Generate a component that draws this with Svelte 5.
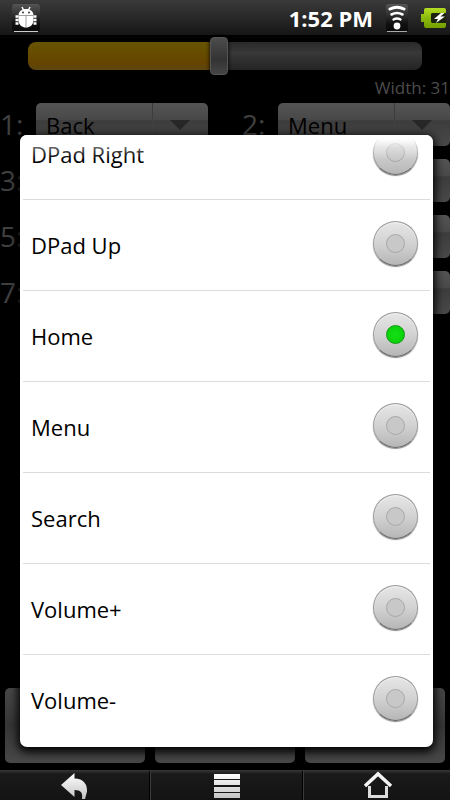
<script>
  let width = $state(31);
  let selected = $state('Home');
  const maxWidth = 64;
  const keys = ['DPad Right', 'DPad Up', 'Home', 'Menu', 'Search', 'Volume+', 'Volume-'];
  const choices = ['Back', 'Home', 'Menu', 'Search'];
  let slots = $state(['Back', 'Menu', 'Home', 'Search', 'Back', 'Menu', 'Home', 'Search']);
  const fill = $derived((width / maxWidth) * 100);
</script>

<div class="screen">
  <header class="status">
    <svg class="bug" width="28" height="28" viewBox="0 0 28 28" aria-hidden="true">
      <defs>
        <linearGradient id="tile" x1="0" y1="0" x2="0" y2="1">
          <stop offset="0" stop-color="#555" /><stop offset="0.7" stop-color="#111" /><stop offset="1" stop-color="#080808" />
        </linearGradient>
      </defs>
      <rect width="28" height="28" rx="3" fill="url(#tile)" />
      <path d="M2 27.500h24" stroke="#ccc" />
      <path d="M10 3l1.500 3M18 3l-1.500 3" stroke="#fff" stroke-width="1.500" />
      <path d="M6.500 11C7 3 21 3 21.500 11v5c0 10-15 10-15 0z" fill="#fff" />
      <path d="M3.500 12.500h3M3.500 16h3M3.500 19.500h3M21.500 12.500h3M21.500 16h3M21.500 19.500h3" stroke="#fff" stroke-width="2.400" />
      <path d="M6.500 11.500h15M14 11.500v11.500" stroke="#888" stroke-width="0.800" />
      <circle cx="11" cy="8.500" r="0.900" fill="#222" /><circle cx="17" cy="8.500" r="0.900" fill="#222" />
    </svg>
    <time>1:52 PM</time>
    <svg class="wifi" width="22" height="28" viewBox="0 0 22 28" aria-hidden="true">
      <rect width="22" height="28" rx="3" fill="url(#tile)" />
      <path d="M1 27.500h20" stroke="#aaa" />
      <circle cx="11" cy="22" r="3.400" fill="#fff" />
      <g fill="none" stroke="#fff" stroke-linecap="round">
        <path d="M4 5Q11 1.500 18 5" stroke-width="3" />
        <path d="M5.500 10.500Q11 7.500 16.500 10.500" stroke-width="2.600" />
        <path d="M7.500 15.500Q11 13.500 14.500 15.500" stroke-width="2.400" />
      </g>
    </svg>
    <svg width="27" height="22" viewBox="0 0 27 22" aria-hidden="true">
      <defs>
        <linearGradient id="cell" x1="0" y1="0" x2="0" y2="1">
          <stop offset="0" stop-color="#b4dc22" /><stop offset="0.5" stop-color="#8ab80c" /><stop offset="1" stop-color="#75a000" />
        </linearGradient>
      </defs>
      <path d="M6 1h18q2 0 2 2v3H13q-2 0-2 2v6q0 2 2 2h13v2q0 3-2 3H6q-2 0-2-3v-3H1V7h3V3q0-2 2-2z" fill="url(#cell)" />
      <path d="M13 6h13v10H13q-2 0-2-2V8q0-2 2-2z" fill="#1c2410" />
      <path d="M21 6l-7 6h4l-2 4 9-6.500h-4.500l4-3.500z" fill="#fff" />
    </svg>
  </header>

  <main>
    <input
      class="slider"
      type="range"
      min="0"
      max={maxWidth}
      bind:value={width}
      aria-label="Width"
      style="--fill: {fill}%"
    />
    <p class="readout">Width: {width}</p>

    <div class="slots">
      {#each slots as slot, i}
        <div class="slot">
          <label for="slot-{i}">{i + 1}:</label>
          <div class="spinner">
            <select id="slot-{i}" bind:value={slots[i]}>
              {#each choices as c}<option>{c}</option>{/each}
            </select>
            <svg width="20" height="10" viewBox="0 0 20 10" aria-hidden="true"><path d="M0 0h20L10 10z" fill="#272727" /></svg>
          </div>
        </div>
      {/each}
    </div>

    <div class="actions">
      <button type="button" aria-label="Save"></button>
      <button type="button" aria-label="Reset"></button>
      <button type="button" aria-label="Cancel"></button>
    </div>

    <div class="dialog" role="radiogroup" aria-label="Key">
      {#each keys as key}
        <label class="row">
          <span>{key}</span>
          <input type="radio" name="key" value={key} bind:group={selected} />
        </label>
      {/each}
    </div>
  </main>

  <nav>
    <button type="button" aria-label="Back">
      <svg width="28" height="28" viewBox="0 0 28 28">
        <defs>
          <linearGradient id="metal" x1="0" y1="0" x2="0" y2="1">
            <stop offset="0" stop-color="#fff" /><stop offset="1" stop-color="#c4c4c4" />
          </linearGradient>
        </defs>
        <path d="M0 13L13.500 1v5.500c9 0 13 6 12.500 13l-2 7.500h-3c1-6-1-9-7.500-9V25z" fill="url(#metal)" />
      </svg>
    </button>
    <button type="button" aria-label="Menu">
      <svg width="26" height="26" viewBox="0 0 26 26">
        <path d="M0 1h26v5H0zM0 7h26v5H0zM0 14h26v5H0zM0 20h26v5H0z" fill="url(#metal)" />
      </svg>
    </button>
    <button type="button" aria-label="Home">
      <svg width="28" height="28" viewBox="0 0 28 28">
        <path d="M2 14L15 2l13 12" fill="none" stroke="#f4f4f4" stroke-width="3.500" />
        <path d="M6.500 14v10.500h17V14" fill="none" stroke="#dcdcdc" stroke-width="3" />
      </svg>
    </button>
  </nav>
</div>

<style>
  :global(body) {
    margin: 0;
    background: #000;
  }
  .screen {
    display: flex;
    flex-direction: column;
    min-height: 100vh;
    overflow: hidden;
    background: #000;
    font-family: 'Open Sans', 'Noto Sans', sans-serif;
  }
  .status {
    display: flex;
    align-items: center;
    box-sizing: border-box;
    height: 35px;
    padding: 0 3px 0 12px;
    background: linear-gradient(#3a3a3a, #161616);
  }
  time {
    margin-left: auto;
    color: #fff;
    font: bold 22px/32px 'Open Sans', 'Noto Sans', sans-serif;
  }
  .wifi {
    margin: 0 12px 0 13px;
  }
  main {
    position: relative;
    display: flex;
    flex: 1;
    flex-direction: column;
  }
  .slider {
    appearance: none;
    height: 38px;
    margin: 2px 28px 0;
    background: none;
  }
  .slider::-webkit-slider-runnable-track {
    height: 28px;
    border-radius: 8px;
    background:
      linear-gradient(#665500, #664400 75%, #5c4610) 0 0 / var(--fill) 100% no-repeat,
      linear-gradient(#2a2a2a, #383838 40%, #242424);
  }
  .slider::-webkit-slider-thumb {
    appearance: none;
    width: 18px;
    height: 38px;
    margin-top: -5px;
    border: 1px solid #555;
    border-radius: 4px;
    background: linear-gradient(#4c4c4c, #333 60%, #454545);
    box-shadow: 0 0 4px #000;
  }
  .readout {
    margin: 0;
    color: #4c4c4c;
    font-size: 17px;
    line-height: 26px;
    text-align: right;
  }
  .slots {
    display: grid;
    grid-template-columns: 1fr 1fr;
    gap: 13px 34px;
    margin-top: 2px;
  }
  .slot {
    display: flex;
    align-items: center;
  }
  .slot label {
    width: 36px;
    color: #404040;
    font-size: 28px;
    line-height: 43px;
  }
  .spinner {
    position: relative;
    flex: 1;
    min-width: 0;
  }
  select {
    appearance: none;
    display: block;
    width: 100%;
    height: 43px;
    padding: 0 60px 0 10px;
    border: 0;
    border-radius: 5px;
    background:
      linear-gradient(#383838, #4a4a4a) calc(100% - 55px) 0 / 1px 100% no-repeat,
      linear-gradient(#545454, #484848 40%, #3c3c3c 41%, #494949);
    color: #000;
    font: 22px 'Open Sans', 'Noto Sans', sans-serif;
  }
  .spinner svg {
    position: absolute;
    top: 17px;
    right: 18px;
    pointer-events: none;
  }
  .actions {
    display: flex;
    gap: 10px;
    margin-top: auto;
    padding: 0 5px 7px;
  }
  .actions button {
    flex: 1;
    height: 75px;
    border: 0;
    border-radius: 5px;
    background: linear-gradient(#484848, #363636 50%, #484848);
  }
  .dialog {
    position: absolute;
    inset: 100px 17px 23px 20px;
    display: flex;
    flex-direction: column;
    justify-content: flex-end;
    box-sizing: border-box;
    overflow: hidden;
    padding: 0 3px 1px;
    border-radius: 7px;
    background: #fff;
    box-shadow: 0 3px 10px 2px #000;
  }
  .dialog::before {
    content: '';
    position: absolute;
    inset: 0 0 auto;
    height: 24px;
    background: linear-gradient(#fff 15%, #fff6 50%, #fff0);
  }
  .row {
    display: flex;
    flex: none;
    align-items: center;
    justify-content: space-between;
    box-sizing: border-box;
    height: 91px;
    padding: 0 12px 0 8px;
    border-bottom: 1px solid #dcdcdc;
    color: #000;
    font-size: 22px;
    line-height: 30px;
  }
  .row:last-child {
    border-color: transparent;
  }
  .row input {
    appearance: none;
    display: grid;
    place-items: center;
    box-sizing: border-box;
    width: 45px;
    height: 45px;
    margin: 0 0 4px;
    border: 1px solid #999;
    border-bottom-color: #666;
    border-radius: 50%;
    background: linear-gradient(#e6e6e6, #d2d2d2 50%, #b6b6b6);
    box-shadow: 0 1px 1px #888, inset 0 1px 1px #f4f4f4;
  }
  .row input::before {
    content: '';
    box-sizing: border-box;
    width: 19px;
    height: 19px;
    border: 1px solid #a8a8a8;
    border-radius: 50%;
    background: #c8c8c8;
  }
  .row input:checked::before {
    border-color: #0a9a0a;
    background: radial-gradient(#14e014, #0cd40c 60%, #0cb80c);
  }
  nav {
    display: grid;
    grid-template-columns: 150fr 153fr 147fr;
    height: 30px;
    background: linear-gradient(#303030, #1a1a1a 3px, #131313);
    border-top: 1px solid #333;
    box-sizing: border-box;
  }
  nav button {
    display: flex;
    align-items: center;
    justify-content: center;
    padding: 0;
    border: 0;
    background: none;
  }
  nav button svg {
    overflow: visible;
  }
  nav button + button {
    border-left: 1px solid #3c3c3c;
    box-shadow: -1px 0 #000;
  }
</style>
